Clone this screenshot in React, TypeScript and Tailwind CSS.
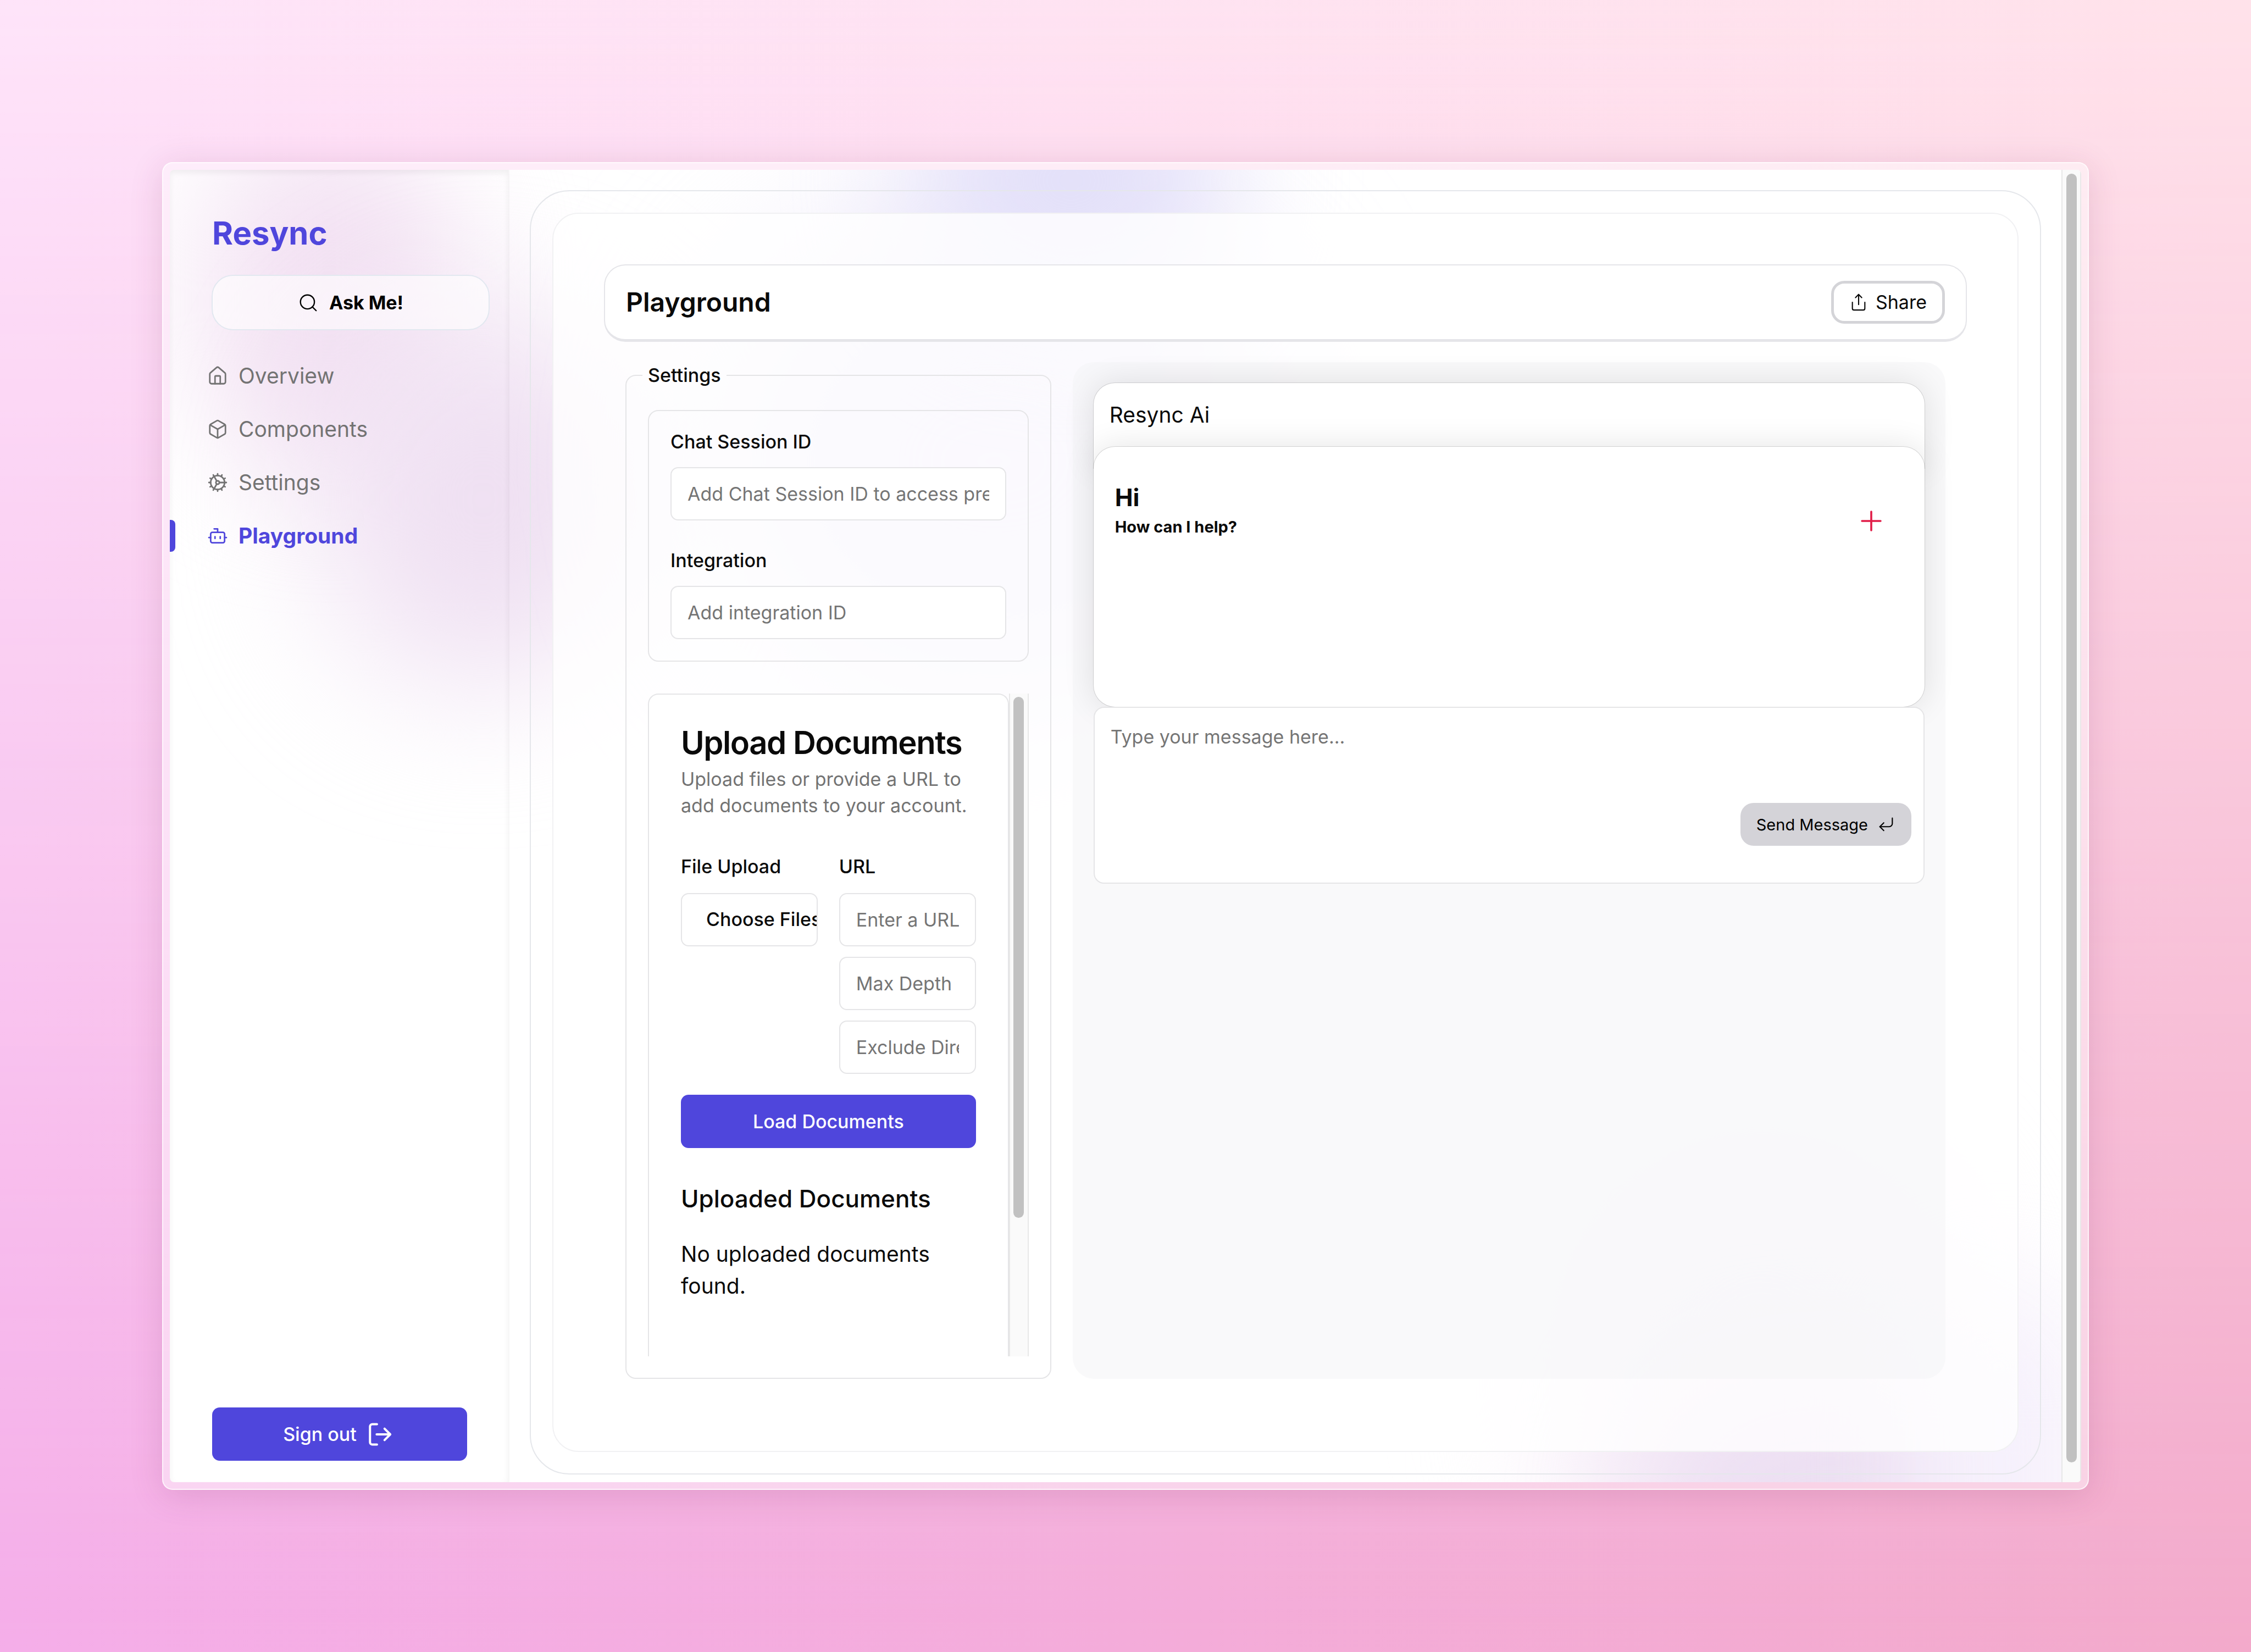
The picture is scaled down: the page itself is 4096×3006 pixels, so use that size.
import React from "react";
import { Bot, Box, Cog, CornerDownLeft, House, Plus, Search, Share } from "lucide-react";

const navItems = [
  { label: "Overview", icon: House, active: false },
  { label: "Components", icon: Box, active: false },
  { label: "Settings", icon: Cog, active: false },
  { label: "Playground", icon: Bot, active: true },
];

const field =
  "block h-[97px] w-full min-w-0 rounded-[14px] border-2 border-[#e5e5e7] bg-white px-[29px] text-[34px] leading-[48px] text-[#0a0a0a] placeholder:text-[#757575]";

function SignOutIcon() {
  return (
    <svg
      viewBox="0 0 24 24"
      className="size-[58px]"
      fill="none"
      stroke="currentColor"
      strokeWidth="1.65"
      strokeLinecap="round"
      strokeLinejoin="round"
      aria-hidden="true"
    >
      <path d="M9.5 4.3H6A1.75 1.75 0 0 0 4.25 6v12A1.75 1.75 0 0 0 6 19.7h3.5" />
      <path d="M9.25 12h10" />
      <path d="M15.2 7.7l4.3 4.3-4.3 4.3" />
    </svg>
  );
}

function Backdrop() {
  return (
    <div className="pointer-events-none absolute inset-0 overflow-hidden" aria-hidden="true">
      <div className="absolute left-[60px] -top-[80px] h-[640px] w-[460px] rounded-full bg-[#f3e2f3] blur-[110px]" />
      <div className="absolute left-[280px] top-[260px] h-[680px] w-[580px] rounded-full bg-[#efe0f2] blur-[130px]" />
      <div className="absolute left-[1000px] top-[100px] h-[860px] w-[1000px] rounded-full bg-[#e9e3f8] blur-[160px]" />
      <div className="absolute left-[1360px] -top-[220px] h-[480px] w-[560px] rounded-full bg-[#e3e0f9] blur-[110px]" />
      <div className="absolute -bottom-[260px] right-[200px] h-[900px] w-[760px] rounded-full bg-[#f8eef9] blur-[130px]" />
      <div className="absolute -bottom-[280px] right-[120px] h-[480px] w-[680px] rounded-full bg-[#ecdff2] blur-[110px]" />
      <div className="absolute -bottom-[300px] right-0 h-[640px] w-[300px] rounded-full bg-[#f6f1fc] blur-[100px]" />
    </div>
  );
}

function Sidebar() {
  return (
    <aside className="relative flex w-[618px] shrink-0 flex-col border-r-2 border-black/3 pb-[39px] shadow-[inset_0_5px_12px_rgba(0,0,0,0.06)]">
      <h1 className="mt-[86px] pl-[77px] text-[58px] leading-[58px] font-bold text-[#4f46dc]">Resync</h1>
      <button
        type="button"
        className="mt-[47px] mr-[34px] ml-[76px] flex h-[101px] items-center justify-center gap-[19px] rounded-[39px] border-2 border-[#e2e8f0] bg-white/60 text-[34px] leading-[48px] font-bold text-black"
      >
        <Search className="size-[38px]" strokeWidth={1.5} />
        Ask Me!
      </button>
      <nav className="mt-[54px] flex flex-col gap-[39px]">
        {navItems.map(({ label, icon: Icon, active }) => (
          <a
            key={label}
            href="#"
            aria-current={active ? "page" : undefined}
            className={
              active
                ? "flex h-[58px] items-center text-[39px] leading-[58px] font-bold text-[#4f46dc]"
                : "flex h-[58px] items-center text-[39px] leading-[58px] text-[#737373]"
            }
          >
            <span
              className={
                active ? "mr-[58px] h-[58px] w-[10px] rounded-r-[8px] bg-[#4f46dc]" : "mr-[58px] h-[58px] w-[10px]"
              }
            />
            <Icon className="mr-[19px] size-[38px]" strokeWidth={1.75} />
            {label}
          </a>
        ))}
      </nav>
      <button
        type="button"
        className="mt-auto mr-[75px] ml-[77px] flex h-[97px] items-center justify-center gap-[14px] rounded-[14px] bg-[#4f46dc] text-[34px] leading-[48px] font-medium text-white"
      >
        Sign out
        <SignOutIcon />
      </button>
    </aside>
  );
}

function SettingsPanel() {
  return (
    <fieldset className="flex min-w-0 flex-col gap-[58px] rounded-[19px] border-2 border-[#e5e5e7] p-[39px]">
      <legend className="-ml-[10px] px-[10px] text-[34px] leading-[48px] font-medium">Settings</legend>

      <div className="flex flex-col rounded-[19px] border-2 border-[#e5e5e7] p-[39px]">
        <label htmlFor="session" className="text-[34px] leading-[34px] font-medium">
          Chat Session ID
        </label>
        <input
          id="session"
          type="text"
          placeholder="Add Chat Session ID to access previous chats"
          className={`mt-[29px] ${field}`}
        />
        <label htmlFor="integration" className="mt-[56px] text-[34px] leading-[34px] font-medium">
          Integration
        </label>
        <input id="integration" type="text" placeholder="Add integration ID" className={`mt-[29px] ${field}`} />
      </div>

      <div className="flex min-h-0 flex-1 overflow-hidden">
        <section className="min-w-0 flex-1 rounded-t-[19px] border-2 border-b-0 border-[#e5e5e7] bg-white p-[58px]">
          <h3 className="text-[58px] leading-[58px] font-semibold tracking-tight whitespace-nowrap">
            Upload Documents
          </h3>
          <p className="mt-[14px] text-[34px] leading-[48px] text-[#737373]">
            Upload files or provide a URL to add documents to your account.
          </p>
          <form className="mt-[58px]">
            <div className="grid grid-cols-2 gap-[39px]">
              <div className="min-w-0">
                <label htmlFor="files" className="block text-[34px] leading-[58px] font-medium">
                  File Upload
                </label>
                <input
                  id="files"
                  type="file"
                  multiple
                  className="mt-[19px] block h-[97px] w-full min-w-0 rounded-[14px] border-2 border-[#e5e5e7] bg-white py-[22px] pl-[29px] text-[34px] leading-[48px] file:border-0 file:bg-transparent file:px-[15px] file:text-[34px] file:leading-[48px] file:font-medium file:text-[#0a0a0a]"
                />
              </div>
              <div className="flex min-w-0 flex-col gap-[19px]">
                <label htmlFor="url" className="block text-[34px] leading-[58px] font-medium">
                  URL
                </label>
                <input id="url" type="text" placeholder="Enter a URL" className={field} />
                <input type="text" aria-label="Max Depth" placeholder="Max Depth" className={field} />
                <input
                  type="text"
                  aria-label="Exclude Directories"
                  placeholder="Exclude Directories"
                  className={field}
                />
              </div>
            </div>
            <button
              type="button"
              className="mt-[38px] h-[97px] w-full rounded-[14px] bg-[#4f46dc] text-[34px] leading-[48px] font-medium text-white"
            >
              Load Documents
            </button>
          </form>
          <h4 className="mt-[58px] text-[44px] leading-[68px] font-medium whitespace-nowrap">Uploaded Documents</h4>
          <p className="mt-[38px] text-[39px] leading-[58px]">No uploaded documents found.</p>
        </section>
        <div className="flex w-[36px] shrink-0 justify-center border-x-2 border-[#e8e8e8] bg-[#fafafa] pt-[6px]">
          <div className="h-[79%] w-[19px] rounded-full bg-[#c1c1c1]" />
        </div>
      </div>
    </fieldset>
  );
}

function ChatPanel() {
  return (
    <section className="col-span-2 min-w-0 rounded-[39px] bg-[#f4f4f5]/50 px-[38px] py-[38px]">
      <h3 className="rounded-t-[39px] bg-white px-[29px] pt-[29px] pb-[68px] text-[39px] leading-[58px] shadow-[0_0_0_1px_rgba(0,0,0,0.13),0_0_58px_rgba(0,0,0,0.11)]">
        Resync Ai
      </h3>
      <div className="relative -mt-[39px] flex h-[473px] items-start justify-between rounded-[39px] bg-white pt-[58px] pr-[68px] pl-[39px] shadow-[0_0_0_1px_rgba(0,0,0,0.13),0_0_58px_rgba(0,0,0,0.11)]">
        <div className="font-bold">
          <p className="text-[44px] leading-[68px]">Hi</p>
          <p className="text-[29px] leading-[39px]">How can I help?</p>
        </div>
        <button type="button" aria-label="New chat" className="mt-[48px] text-[#e11d48]">
          <Plus className="size-[58px]" strokeWidth={1.5} />
        </button>
      </div>
      <form className="relative flex h-[322px] flex-col rounded-[19px] border-2 border-[#e5e5e7] bg-white pb-[67px]">
        <textarea
          aria-label="Message"
          placeholder="Type your message here..."
          className="min-h-0 w-full flex-1 resize-none overflow-hidden bg-transparent p-[29px] text-[34px] leading-[48px] placeholder:text-[#757575]"
        />
        <button
          type="button"
          className="mr-[22px] flex h-[78px] items-center gap-[16px] self-end rounded-[24px] bg-[#d4d3d8] px-[29px] text-[29px] leading-[39px] text-black"
        >
          Send Message
          <CornerDownLeft className="size-[34px]" strokeWidth={1.5} />
        </button>
      </form>
    </section>
  );
}

export default function App() {
  return (
    <div className="relative flex min-h-screen bg-linear-to-r from-[#f5aee9] to-[#f3aacb] p-[295px] font-['Inter',sans-serif] text-[#0a0a0a]">
      <div className="absolute inset-0 bg-linear-to-r from-[#fee4f9] to-[#ffe2ea] mask-[linear-gradient(to_bottom,black,transparent)]" />
      <div className="relative flex min-w-0 flex-1 rounded-[19px] border-2 border-white/70 bg-white/45 p-[12px] shadow-[0_10px_60px_rgba(120,40,90,0.16)]">
        <div className="relative flex min-w-0 flex-1 overflow-hidden rounded-[8px] bg-white">
          <Backdrop />
          <Sidebar />
          <main className="relative flex min-w-0 flex-1 flex-col px-[37px] pt-[37px] pb-[14px]">
            <div className="flex flex-1 flex-col rounded-[72px] border-2 border-[#e5e7eb] p-[39px]">
              <div className="flex flex-1 flex-col rounded-[48px] border-2 border-[#f1f1f3] bg-white/80 p-[92px]">
                <header className="flex items-center justify-between rounded-[39px] border-2 border-b-5 border-[#e5e5e9] bg-white px-[38px] py-[28px]">
                  <h2 className="text-[48px] leading-[68px] font-semibold">Playground</h2>
                  <button
                    type="button"
                    className="flex h-[78px] items-center gap-[14px] rounded-[24px] border-5 border-[#d4d4d8] bg-white px-[28px] text-[34px] leading-[48px]"
                  >
                    <Share className="size-[34px]" strokeWidth={1.5} />
                    Share
                  </button>
                </header>
                <div className="grid flex-1 grid-cols-3 gap-[39px] px-[39px] pt-[37px] pb-[39px]">
                  <SettingsPanel />
                  <ChatPanel />
                </div>
              </div>
            </div>
          </main>
          <div className="relative flex w-[36px] shrink-0 justify-center border-x-2 border-[#e8e8e8] bg-[#fafafa] pt-[7px]">
            <div className="h-[98.5%] w-[19px] rounded-full bg-[#c1c1c1]" />
          </div>
        </div>
      </div>
    </div>
  );
}
